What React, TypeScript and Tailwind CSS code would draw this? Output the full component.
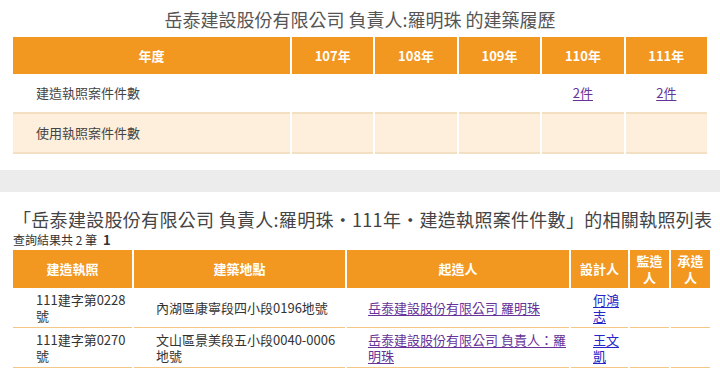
import React from 'react';

const years = ['107年', '108年', '109年', '110年', '111年'];

const permits = [
  {
    no: '111建字第0228號',
    site: '內湖區康寧段四小段0196地號',
    owner: '岳泰建設股份有限公司 羅明珠',
    designer: '何鴻志',
  },
  {
    no: '111建字第0270號',
    site: '文山區景美段五小段0040-0006地號',
    owner: '岳泰建設股份有限公司 負責人：羅明珠',
    designer: '王文凱',
  },
];

export default function App() {
  return (
    <div
      className="w-[720px] h-[376px] overflow-hidden bg-white text-[#444]"
      style={{ fontFamily: '"Noto Sans CJK TC", "Noto Sans", sans-serif' }}
    >
      {/* History summary */}
      <div className="px-[13px]">
        <h2 className="pt-[7px] pb-[6px] text-center text-[18px] leading-[24px] text-[#555]">
          岳泰建設股份有限公司 負責人:羅明珠 的建築履歷
        </h2>
        <div className="grid grid-cols-[277px_repeat(5,1fr)] gap-x-[2px] text-[13px]">
          <div className="h-[37px] flex items-center justify-center bg-[#f2971f] text-white font-bold">年度</div>
          {years.map((y) => (
            <div key={y} className="h-[37px] flex items-center justify-center bg-[#f2971f] text-white font-bold">
              {y}
            </div>
          ))}

          <div className="h-[40px] flex items-center pl-[23px] border-b-2 border-[#f3dfc2]">建造執照案件件數</div>
          {years.map((y, i) => (
            <div key={y} className="h-[40px] flex items-center justify-center border-b-2 border-[#f3dfc2]">
              {i >= 3 && <a className="text-[#663399] underline underline-offset-2">2件</a>}
            </div>
          ))}

          <div className="h-[40px] flex items-center pl-[23px] bg-[#fdefdc] border-b-2 border-[#f3dfc2]">使用執照案件件數</div>
          {years.map((y) => (
            <div key={y} className="h-[40px] bg-[#fdefdc] border-b-2 border-[#f3dfc2]" />
          ))}
        </div>
      </div>

      {/* Divider band */}
      <div className="mt-[16px] h-[22px] bg-[#ececec]" />

      {/* Related permits */}
      <div className="px-[13px]">
        <h3 className="pt-[16px] text-[18px] leading-[22px] tracking-[0.3px] text-[#444] whitespace-nowrap">
          「岳泰建設股份有限公司 負責人:羅明珠‧111年‧建造執照案件件數」的相關執照列表
        </h3>
        <div className="h-[20px] flex items-center text-[12px] text-[#333]">
          查詢結果共 2 筆 <span className="ml-[6px] text-[13px] font-bold">1</span>
        </div>
        <div className="grid grid-cols-[119px_211px_222px_57px_39px_39px] gap-x-[2px] text-[13px] leading-[16px]">
          <div className="h-[38px] flex items-center justify-center bg-[#f2971f] text-white font-bold">建造執照</div>
          <div className="h-[38px] flex items-center justify-center bg-[#f2971f] text-white font-bold">建築地點</div>
          <div className="h-[38px] flex items-center justify-center bg-[#f2971f] text-white font-bold">起造人</div>
          <div className="h-[38px] flex items-center justify-center bg-[#f2971f] text-white font-bold">設計人</div>
          <div className="h-[38px] flex items-center justify-center text-center px-[4px] bg-[#f2971f] text-white font-bold leading-[17px]">監造人</div>
          <div className="h-[38px] flex items-center justify-center text-center px-[4px] bg-[#f2971f] text-white font-bold leading-[17px]">承造人</div>

          {permits.map((p) => (
            <React.Fragment key={p.no}>
              <div className="h-[40px] flex items-center pl-[23px] border-b border-[#f5c784] text-[#333]">
                <span>{p.no}</span>
              </div>
              <div className="h-[40px] flex items-center pl-[22px] pr-[2px] border-b border-[#f5c784] text-[#333]">
                <span>{p.site}</span>
              </div>
              <div className="h-[40px] flex items-center pl-[21px] border-b border-[#f5c784]">
                <a className="text-[#663399] underline underline-offset-2">{p.owner}</a>
              </div>
              <div className="h-[40px] flex items-center pl-[22px] pr-[8px] border-b border-[#f5c784]">
                <a className="text-[#2525c8] underline underline-offset-2">{p.designer}</a>
              </div>
              <div className="h-[40px] border-b border-[#f5c784]" />
              <div className="h-[40px] border-b border-[#f5c784]" />
            </React.Fragment>
          ))}
        </div>
      </div>
    </div>
  );
}
